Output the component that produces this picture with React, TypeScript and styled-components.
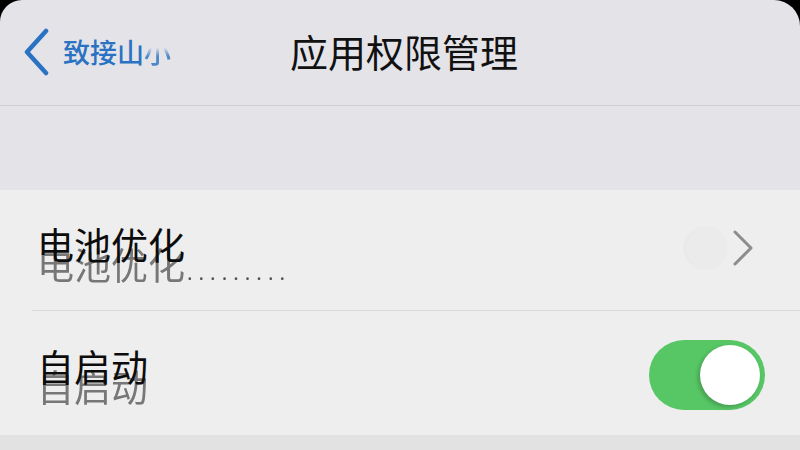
import React from "react";
import styled, { createGlobalStyle } from "styled-components";

const GlobalStyle = createGlobalStyle`
  html, body {
    margin: 0;
    padding: 0;
    background: #000;
  }
  body {
    font-family: "Noto Sans CJK SC", "Noto Sans", sans-serif;
  }
`;

const Screen = styled.div`
  width: 800px;
  height: 450px;
  overflow: hidden;
  background: #e4e3e8;
  border-radius: 22px 26px 0 0;
  display: flex;
  flex-direction: column;
`;

const NavBar = styled.div`
  height: 106px;
  flex-shrink: 0;
  position: relative;
  display: flex;
  align-items: center;
  border-bottom: 1.5px solid #cfced3;
  box-sizing: border-box;
`;

const BackButton = styled.div`
  display: flex;
  align-items: center;
  gap: 13px;
  padding-left: 22px;
  color: #2a72c2;
  font-size: 27px;
  font-weight: 500;
  line-height: 1;
  margin-top: -2px;
`;

const Faded = styled.span`
  opacity: 0.8;
  -webkit-mask-image: linear-gradient(to bottom, transparent 40%, #000 62%);
  mask-image: linear-gradient(to bottom, transparent 40%, #000 62%);
`;

const Title = styled.div`
  position: absolute;
  left: 0;
  right: 0;
  top: 0;
  bottom: 0;
  display: flex;
  align-items: center;
  justify-content: center;
  font-size: 38px;
  color: #111;
  padding-left: 8px;
  padding-bottom: 4px;
  pointer-events: none;
`;

const Gap = styled.div`
  height: 84px;
  flex-shrink: 0;
`;

const List = styled.div`
  background: #eeeeee;
  display: flex;
  flex-direction: column;
`;

const Row = styled.div<{ $divider?: boolean }>`
  height: ${({ $divider }) => ($divider ? "121px" : "124px")};
  display: flex;
  align-items: center;
  justify-content: space-between;
  padding: 0 36px 0 37px;
  box-sizing: border-box;
  position: relative;
  ${({ $divider }) =>
    $divider
      ? `
    &::after {
      content: "";
      position: absolute;
      left: 32px;
      right: 0;
      bottom: 0;
      height: 1.5px;
      background: #d9d9d9;
    }
  `
      : ""}
`;

const LabelWrap = styled.div<{ $lift: number }>`
  position: relative;
  margin-top: -${({ $lift }) => $lift}px;
`;

const Label = styled.div`
  font-size: 37px;
  line-height: 1;
  color: #0c0c0c;
  position: relative;
  z-index: 1;
`;

const Ghost = styled.div`
  position: absolute;
  left: 0;
  top: 20px;
  font-size: 37px;
  line-height: 1;
  color: #777777;
  white-space: nowrap;
  filter: blur(0.4px);
`;

const Dots = styled.span`
  font-size: 20px;
  letter-spacing: 6px;
  color: #555;
  margin-left: 2px;
`;

const ChevronArea = styled.div`
  position: relative;
  display: flex;
  align-items: center;
  margin-top: -6px;
  margin-right: 10px;
`;

const FaintCircle = styled.div`
  position: absolute;
  right: 26px;
  width: 42px;
  height: 42px;
  border-radius: 50%;
  background: #ebebeb;
  box-shadow: -2px 0 3px rgba(0, 0, 0, 0.03);
`;

const Toggle = styled.div<{ $on: boolean }>`
  width: 116px;
  height: 70px;
  border-radius: 35px;
  background: ${({ $on }) => ($on ? "#57c665" : "#e5e5ea")};
  position: relative;
  margin-right: -1px;
  margin-top: 4px;
`;

const Knob = styled.div<{ $on: boolean }>`
  position: absolute;
  top: 5px;
  ${({ $on }) => ($on ? "right: 5px;" : "left: 5px;")}
  width: 60px;
  height: 60px;
  border-radius: 50%;
  background: #ffffff;
  box-shadow: -2px 2px 4px rgba(0, 0, 0, 0.22);
`;

const Footer = styled.div`
  flex: 1;
  background: #e2e2e3;
`;

const App: React.FC = () => {
  return (
    <>
      <GlobalStyle />
      <Screen>
        <NavBar>
          <BackButton>
            <svg width="28" height="48" viewBox="0 0 28 48">
              <path
                d="M24 3 L5 24 L24 45"
                fill="none"
                stroke="#2a72c2"
                strokeWidth="4.5"
                strokeLinecap="round"
                strokeLinejoin="round"
              />
            </svg>
            <span>
              致接山<Faded>小</Faded>
            </span>
          </BackButton>
          <Title>应用权限管理</Title>
        </NavBar>
        <Gap />
        <List>
          <Row $divider>
            <LabelWrap $lift={12}>
              <Ghost>
                电池优化<Dots>.........</Dots>
              </Ghost>
              <Label>电池优化</Label>
            </LabelWrap>
            <ChevronArea>
              <FaintCircle />
              <svg width="22" height="38" viewBox="0 0 22 38" style={{ position: "relative" }}>
                <path
                  d="M3 3 L19 19 L3 35"
                  fill="none"
                  stroke="#8c8c8c"
                  strokeWidth="3"
                  strokeLinecap="round"
                  strokeLinejoin="round"
                />
              </svg>
            </ChevronArea>
          </Row>
          <Row>
            <LabelWrap $lift={14}>
              <Ghost>自启动</Ghost>
              <Label>自启动</Label>
            </LabelWrap>
            <Toggle $on>
              <Knob $on />
            </Toggle>
          </Row>
        </List>
        <Footer />
      </Screen>
    </>
  );
};

export default App;
